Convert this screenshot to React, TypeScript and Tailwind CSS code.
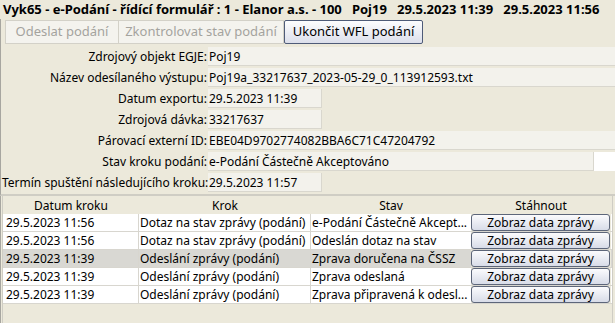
import React from 'react';

const font = { fontFamily: '"Noto Sans", "Open Sans", sans-serif' };

type Field = { label: string; value: string; width: 'short' | 'full' | 'stav' };

const fields: Field[] = [
  { label: 'Zdrojový objekt EGJE:', value: 'Poj19', width: 'full' },
  { label: 'Název odesílaného výstupu:', value: 'Poj19a_33217637_2023-05-29_0_113912593.txt', width: 'full' },
  { label: 'Datum exportu:', value: '29.5.2023 11:39', width: 'short' },
  { label: 'Zdrojová dávka:', value: '33217637', width: 'short' },
  { label: 'Párovací externí ID:', value: 'EBE04D9702774082BBA6C71C47204792', width: 'full' },
  { label: 'Stav kroku podání:', value: 'e-Podání Částečně Akceptováno', width: 'stav' },
  { label: 'Termín spuštění následujícího kroku:', value: '29.5.2023 11:57', width: 'short' },
];

const rows = [
  { datum: '29.5.2023 11:56', krok: 'Dotaz na stav zprávy (podání)', stav: 'e-Podání Částečně Akcept...' },
  { datum: '29.5.2023 11:56', krok: 'Dotaz na stav zprávy (podání)', stav: 'Odeslán dotaz na stav' },
  { datum: '29.5.2023 11:39', krok: 'Odeslání zprávy (podání)', stav: 'Zprava doručena na ČSSZ', selected: true },
  { datum: '29.5.2023 11:39', krok: 'Odeslání zprávy (podání)', stav: 'Zprava odeslaná' },
  { datum: '29.5.2023 11:39', krok: 'Odeslání zprávy (podání)', stav: 'Zprava připravená k odesl...' },
];

function FieldRow({ f }: { f: Field }) {
  return (
    <div className="flex h-[21px] items-stretch">
      <div className="w-[206px] shrink-0 text-right pr-[1px] leading-[19px] whitespace-nowrap">{f.label}</div>
      {f.width === 'short' && (
        <>
          <div className="w-[114px] h-[19px] bg-[#F3F2EC] border-r border-b border-[#D9D7CE] pl-[1px] leading-[19px]">{f.value}</div>
          <div className="flex-1" />
        </>
      )}
      {f.width === 'full' && (
        <div className="flex-1 h-[19px] bg-[#F3F2EC] border-b border-[#D9D7CE] pl-[1px] leading-[19px] whitespace-nowrap">{f.value}</div>
      )}
      {f.width === 'stav' && (
        <div className="flex-1 h-[19px] flex bg-white">
          <div className="w-[386px] bg-[#F3F2EC] border-r border-b border-[#D9D7CE] pl-[1px] leading-[19px] whitespace-nowrap">{f.value}</div>
          <div className="flex-1" />
        </div>
      )}
    </div>
  );
}

export default function App() {
  return (
    <div className="w-[615px] h-[323px] overflow-hidden bg-[#ECE9DB] text-[12px] text-black" style={font}>
      <div className="h-[19px] pl-[3px] text-[13px] font-bold leading-[18px] whitespace-pre">
        Vyk65 - e-Podání - řídící formulář : 1 - Elanor a.s. - 100   Poj19   29.5.2023 11:39   29.5.2023 11:56
      </div>

      <div className="flex h-[26px] pl-[4px] pt-[1px] border-l border-[#A7A6A0] text-[13px]">
        <button className="w-[114px] h-[24px] bg-[#F4F3EE] border border-[#D3D1C8] text-[#A4A39E]">Odeslat podání</button>
        <button className="w-[165px] h-[24px] bg-[#F4F3EE] border border-[#D3D1C8] border-l-0 text-[#A4A39E]">Zkontrolovat stav podání</button>
        <button className="w-[139px] h-[24px] bg-gradient-to-b from-[#FDFDFE] to-[#DCDFEB] border border-[#4E5B78] rounded-[2px] text-black">Ukončit WFL podání</button>
      </div>

      <div className="border-l border-[#A7A6A0] pl-[1px] pt-[2px] border-b-2 border-b-[#CFCDC4]">
        {fields.map((f) => (
          <FieldRow key={f.label} f={f} />
        ))}
      </div>

      <div className="flex h-[130px]">
        <div className="w-[3px] border-l border-[#A7A6A0] border-r border-r-[#CFCDC4]" />
        <div className="flex-1 pt-[1px]">
          <div className="flex h-[17px] leading-[17px] text-center">
            <div className="w-[136px]">Datum kroku</div>
            <div className="w-[172px]">Krok</div>
            <div className="w-[160px]">Stav</div>
            <div className="w-[140px]">Stáhnout</div>
          </div>
          {rows.map((r, i) => (
            <div
              key={i}
              className={`flex h-[18px] leading-[17px] border-b border-[#D8D6CF] whitespace-nowrap ${r.selected ? 'bg-[#D9D8D3]' : 'bg-white'}`}
            >
              <div className="w-[136px] pl-[3px] border-r border-[#D8D6CF]">{r.datum}</div>
              <div className="w-[172px] pl-[1px] border-r border-[#D8D6CF] overflow-hidden">{r.krok}</div>
              <div className="w-[160px] pl-[1px] overflow-hidden">{r.stav}</div>
              <div className="w-[140px] bg-[#ECE9DB]">
                <button className="w-[139px] h-[17px] leading-[15px] bg-gradient-to-b from-[#FBFBFD] to-[#D8DCE8] border border-[#5D667A] rounded-[3px]">
                  Zobraz data zprávy
                </button>
              </div>
            </div>
          ))}
        </div>
        <div className="w-[3px] border-l border-[#CFCDC4]" />
      </div>
    </div>
  );
}
